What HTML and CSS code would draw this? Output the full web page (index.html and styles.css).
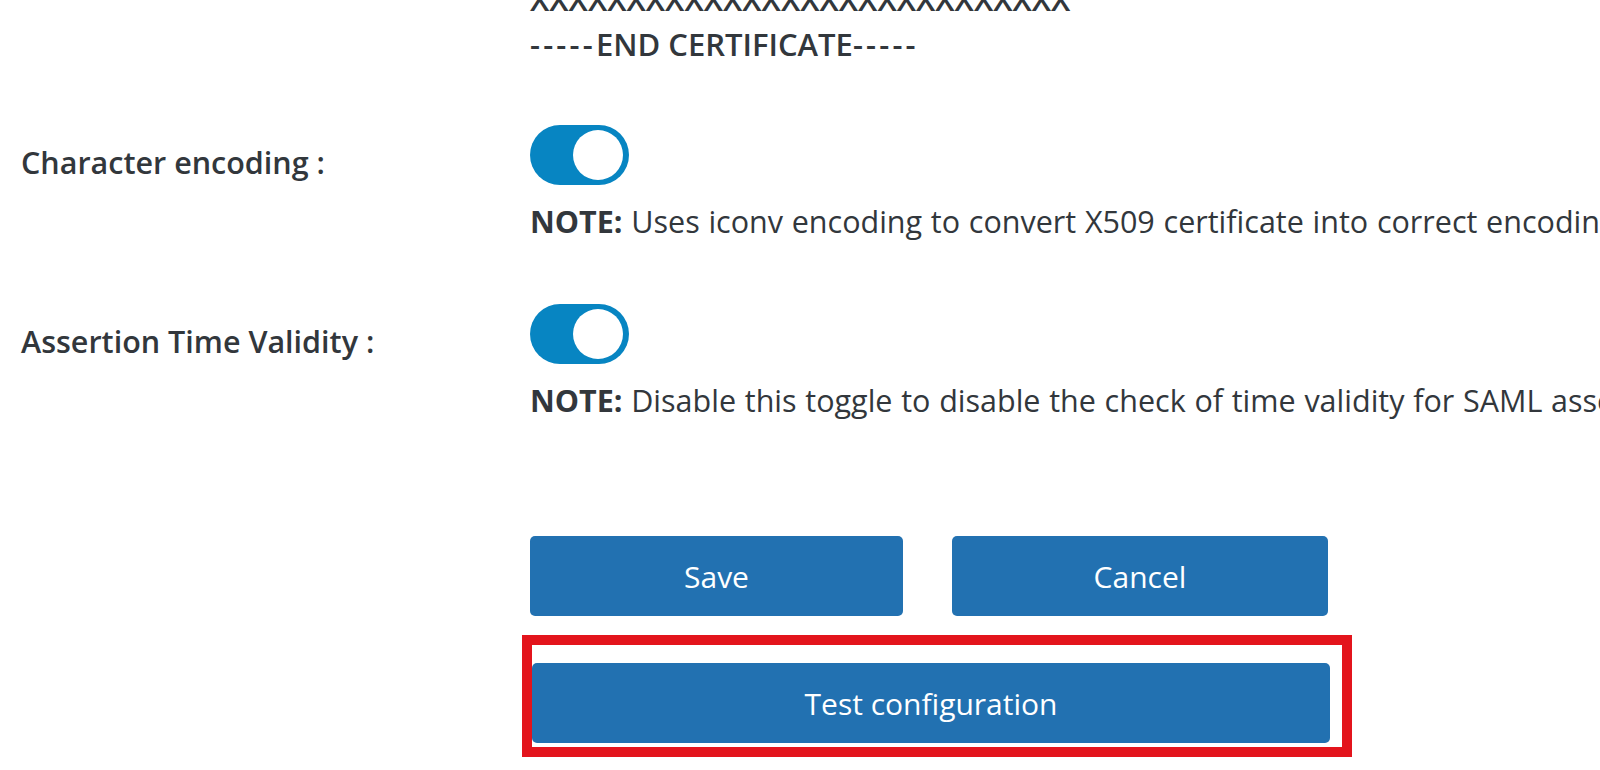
FILE: index.html
```html
<!DOCTYPE html>
<html lang="en">
<head>
<meta charset="utf-8">
<title>SAML settings</title>
<link rel="stylesheet" href="styles.css">
</head>
<body>
<div class="page">
  <div class="cert">
    <div class="cert-line">XXXXXXXXXXXXXXXXXXXXXXXXXXXX</div>
    <div class="cert-line"><span class="dashes">-----</span>END CERTIFICATE<span class="dashes">-----</span></div>
  </div>

  <div class="row row-first">
    <div class="label">Character encoding :</div>
    <div class="field">
      <div class="toggle"><span class="knob"></span></div>
      <div class="note"><b>NOTE:</b> Uses iconv encoding to convert X509 certificate into correct encoding.</div>
    </div>
  </div>

  <div class="row">
    <div class="label">Assertion Time Validity :</div>
    <div class="field">
      <div class="toggle"><span class="knob"></span></div>
      <div class="note"><b>NOTE:</b> Disable this toggle to disable the check of time validity for SAML assertion.</div>
    </div>
  </div>

  <div class="actions">
    <div class="btn-pair">
      <button class="btn">Save</button>
      <button class="btn">Cancel</button>
    </div>
    <div class="highlight">
      <button class="btn btn-wide">Test configuration</button>
    </div>
  </div>
</div>
</body>
</html>
```

FILE: styles.css
```css
html, body {
  margin: 0;
  padding: 0;
  background: #ffffff;
}

body {
  width: 1600px;
  height: 770px;
  overflow: hidden;
  font-family: "Open Sans", "Noto Sans", sans-serif;
  font-size: 30px;
  color: #32373c;
}

.page {
  padding-left: 21px;
}

.cert {
  margin-left: 509px;
  margin-top: -23.5px;
  font-weight: 600;
  font-size: 31px;
  line-height: 45px;
  white-space: nowrap;
}

.dashes {
  letter-spacing: 3.2px;
}

.row {
  display: grid;
  grid-template-columns: 509px 1fr;
  margin-top: 61px;
}

.row-first {
  margin-top: 58.5px;
}

.label {
  font-weight: 600;
  font-size: 30.5px;
  line-height: 48px;
  padding-top: 13px;
  white-space: nowrap;
}

.field {
  display: flex;
  flex-direction: column;
  align-items: flex-start;
  min-width: 0;
  overflow: hidden;
}

.toggle {
  width: 99px;
  height: 60px;
  box-sizing: border-box;
  border-radius: 30px;
  background: #0785c2;
  display: flex;
  justify-content: flex-end;
  align-items: center;
  padding: 0 6px;
}

.knob {
  width: 50px;
  height: 50px;
  border-radius: 50%;
  background: #ffffff;
}

.note {
  margin-top: 12px;
  margin-bottom: -2px;
  font-size: 30.5px;
  word-spacing: 0.8px;
  line-height: 48px;
  white-space: nowrap;
}

.note b {
  font-weight: 700;
  word-spacing: 0;
}

.actions {
  margin-left: 509px;
  margin-top: 114px;
  width: 798px;
}

.btn-pair {
  display: grid;
  grid-template-columns: 373px 376px;
  column-gap: 49px;
}

.btn {
  height: 80px;
  border: none;
  border-radius: 5px;
  background: #2271b1;
  color: #ffffff;
  font-family: "Open Sans", "Noto Sans", sans-serif;
  font-size: 30px;
  font-weight: 400;
  padding: 0;
}

.highlight {
  margin-top: 19px;
  margin-left: -8px;
  width: 830px;
  box-sizing: border-box;
  border: 10px solid #e3141c;
  padding: 18px 12px 4px 0;
}

.btn-wide {
  display: block;
  width: 100%;
}
```
